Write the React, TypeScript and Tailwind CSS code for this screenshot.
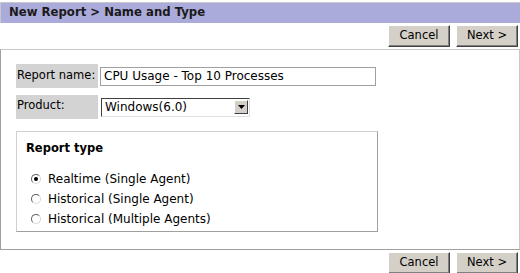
import React from "react";

const font = { fontFamily: '"DejaVu Sans", Verdana, sans-serif' };

function Btn({ children }: { children: React.ReactNode }) {
  return (
    <button
      className="h-[22px] w-[62px] bg-[#d4d0c8] text-[11.5px] text-black border border-t-[#ffffff] border-l-[#ffffff] border-r-[#404040] border-b-[#404040] shadow-[inset_-1px_-1px_0_#808080]"
      style={font}
    >
      {children}
    </button>
  );
}

function Radio({ checked, label }: { checked?: boolean; label: string }) {
  return (
    <div className="flex items-center gap-[7px] h-[20px]">
      <span className="w-[10px] h-[10px] rounded-full bg-white border border-t-[#606060] border-l-[#606060] border-r-[#d8d8d8] border-b-[#d8d8d8] flex items-center justify-center">
        {checked && <span className="w-[4px] h-[4px] rounded-full bg-black" />}
      </span>
      <span className="text-[12px] text-black">{label}</span>
    </div>
  );
}

export default function App() {
  return (
    <div className="w-[520px] h-[273px] bg-white text-black overflow-hidden" style={font}>
      <div className="mt-[2px] h-[21px] bg-[#ababdb] border-t border-l border-[#c8c8c8] flex items-center pl-[8px]">
        <span className="text-[11.7px] font-bold text-[#1a1a1a]">New Report &gt; Name and Type</span>
      </div>
      <div className="flex justify-end gap-[6px] pr-[2px] mt-[2px]">
        <Btn>Cancel</Btn>
        <Btn>Next &gt;</Btn>
      </div>
      <div className="mt-[2px] h-[201px] border border-t-[#c8c8c8] border-l-[#a0a0a0] border-r-[#c8c8c8] border-b-[#a0a0a0] pt-[14px] pl-[15px]">
        <div className="flex items-center gap-[2px]">
          <div className="shrink-0 w-[82px] h-[24px] bg-[#d3d3d3] text-[11.5px] whitespace-nowrap flex items-center pl-[1px]">Report name:</div>
          <div className="shrink-0 w-[276px] h-[19px] border border-[#a0a0a0] text-[12px] whitespace-nowrap flex items-center pl-[3px]">CPU Usage - Top 10 Processes</div>
        </div>
        <div className="flex items-center gap-[3px] mt-[7px]">
          <div className="shrink-0 w-[82px] h-[24px] bg-[#d3d3d3] text-[11.5px] whitespace-nowrap flex items-start pt-[2px] pl-[1px]">Product:</div>
          <div className="shrink-0 w-[149px] h-[19px] border border-t-[#404040] border-l-[#404040] border-r-[#e0e0e0] border-b-[#e0e0e0] flex items-center justify-between pl-[3px] pr-[1px]">
            <span className="text-[12px]">Windows(6.0)</span>
            <span className="w-[14px] h-[14px] bg-[#d4d0c8] border border-t-white border-l-white border-r-[#404040] border-b-[#404040] flex items-center justify-center">
              <svg width="7" height="4" viewBox="0 0 7 4"><path d="M0 0h7L3.5 4z" fill="#000" /></svg>
            </span>
          </div>
        </div>
        <div className="mt-[12px] w-[362px] h-[101px] border border-t-[#d0d0d0] border-l-[#d0d0d0] border-r-[#a0a0a0] border-b-[#a0a0a0] pt-[8px] pl-[14px]">
          <div className="text-[11.5px] font-bold mb-[12px] -ml-[5px]">Report type</div>
          <Radio checked label="Realtime (Single Agent)" />
          <Radio label="Historical (Single Agent)" />
          <Radio label="Historical (Multiple Agents)" />
        </div>
      </div>
      <div className="flex justify-end gap-[6px] pr-[2px] mt-[2px]">
        <Btn>Cancel</Btn>
        <Btn>Next &gt;</Btn>
      </div>
    </div>
  );
}
